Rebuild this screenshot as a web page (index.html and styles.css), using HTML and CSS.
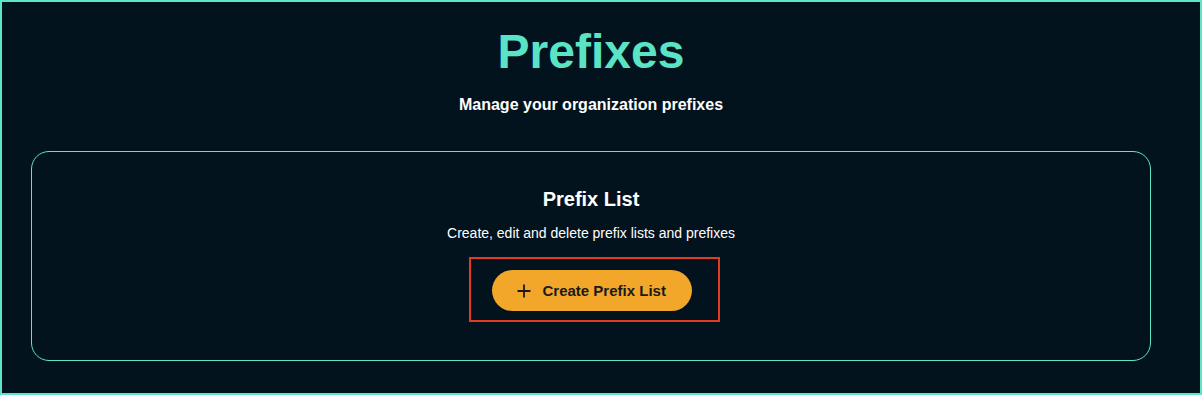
FILE: index.html
```html
<!DOCTYPE html>
<html lang="en">
<head>
<meta charset="utf-8">
<title>Prefixes</title>
<link rel="stylesheet" href="styles.css">
</head>
<body>
<div class="frame">
  <header class="page-head">
    <h1 class="page-title">Prefixes</h1>
    <p class="page-sub">Manage your organization prefixes</p>
  </header>
  <section class="card">
    <h2 class="card-title">Prefix List</h2>
    <p class="card-desc">Create, edit and delete prefix lists and prefixes</p>
    <div class="highlight">
      <button class="btn-create" type="button">
        <svg class="plus" width="14" height="14" viewBox="0 0 14 14" aria-hidden="true">
          <path d="M7 0.5V13.5M0.5 7H13.5" stroke="#1a1a1a" stroke-width="1.8" fill="none"/>
        </svg>
        <span>Create Prefix List</span>
      </button>
    </div>
  </section>
</div>
</body>
</html>
```

FILE: styles.css
```css
* { box-sizing: border-box; }
html, body {
  margin: 0;
  padding: 0;
  background: #03131e;
}
body {
  font-family: "Liberation Sans", Arial, sans-serif;
  color: #ffffff;
}
.frame {
  width: 1202px;
  height: 395px;
  border: 2px solid #5ce5c8;
  background: #03131e;
  padding: 22px 49px 0 29px;
  display: flex;
  flex-direction: column;
  align-items: stretch;
}
.page-head {
  display: flex;
  flex-direction: column;
  align-items: center;
}
.page-title {
  margin: 0;
  font-size: 48px;
  line-height: 56px;
  font-weight: 700;
  color: #5be3c6;
}
.page-sub {
  margin: 15px 0 0;
  font-size: 16px;
  line-height: 20px;
  font-weight: 700;
  color: #ffffff;
}
.card {
  margin-top: 36px;
  border: 1px solid #5ce5c8;
  border-radius: 18px;
  height: 210px;
  padding: 35px 0 0;
  display: flex;
  flex-direction: column;
  align-items: center;
}
.card-title {
  margin: 0;
  font-size: 20px;
  line-height: 24px;
  font-weight: 700;
  color: #ffffff;
}
.card-desc {
  margin: 12px 0 0;
  font-size: 14px;
  line-height: 20px;
  font-weight: 400;
  color: #ffffff;
}
.highlight {
  margin-top: 14px;
  margin-left: 6px;
  border: 2px solid #e23b22;
  padding: 11px 26px 9px 21px;
  display: flex;
}
.btn-create {
  width: 200px;
  height: 41px;
  border: none;
  border-radius: 21px;
  background: #f2a72a;
  color: #1a1a1a;
  font-family: "Liberation Sans", Arial, sans-serif;
  font-size: 15px;
  font-weight: 700;
  display: flex;
  align-items: center;
  gap: 12px;
  padding: 0 0 0 25px;
  cursor: pointer;
}
.plus { flex: none; }
```
